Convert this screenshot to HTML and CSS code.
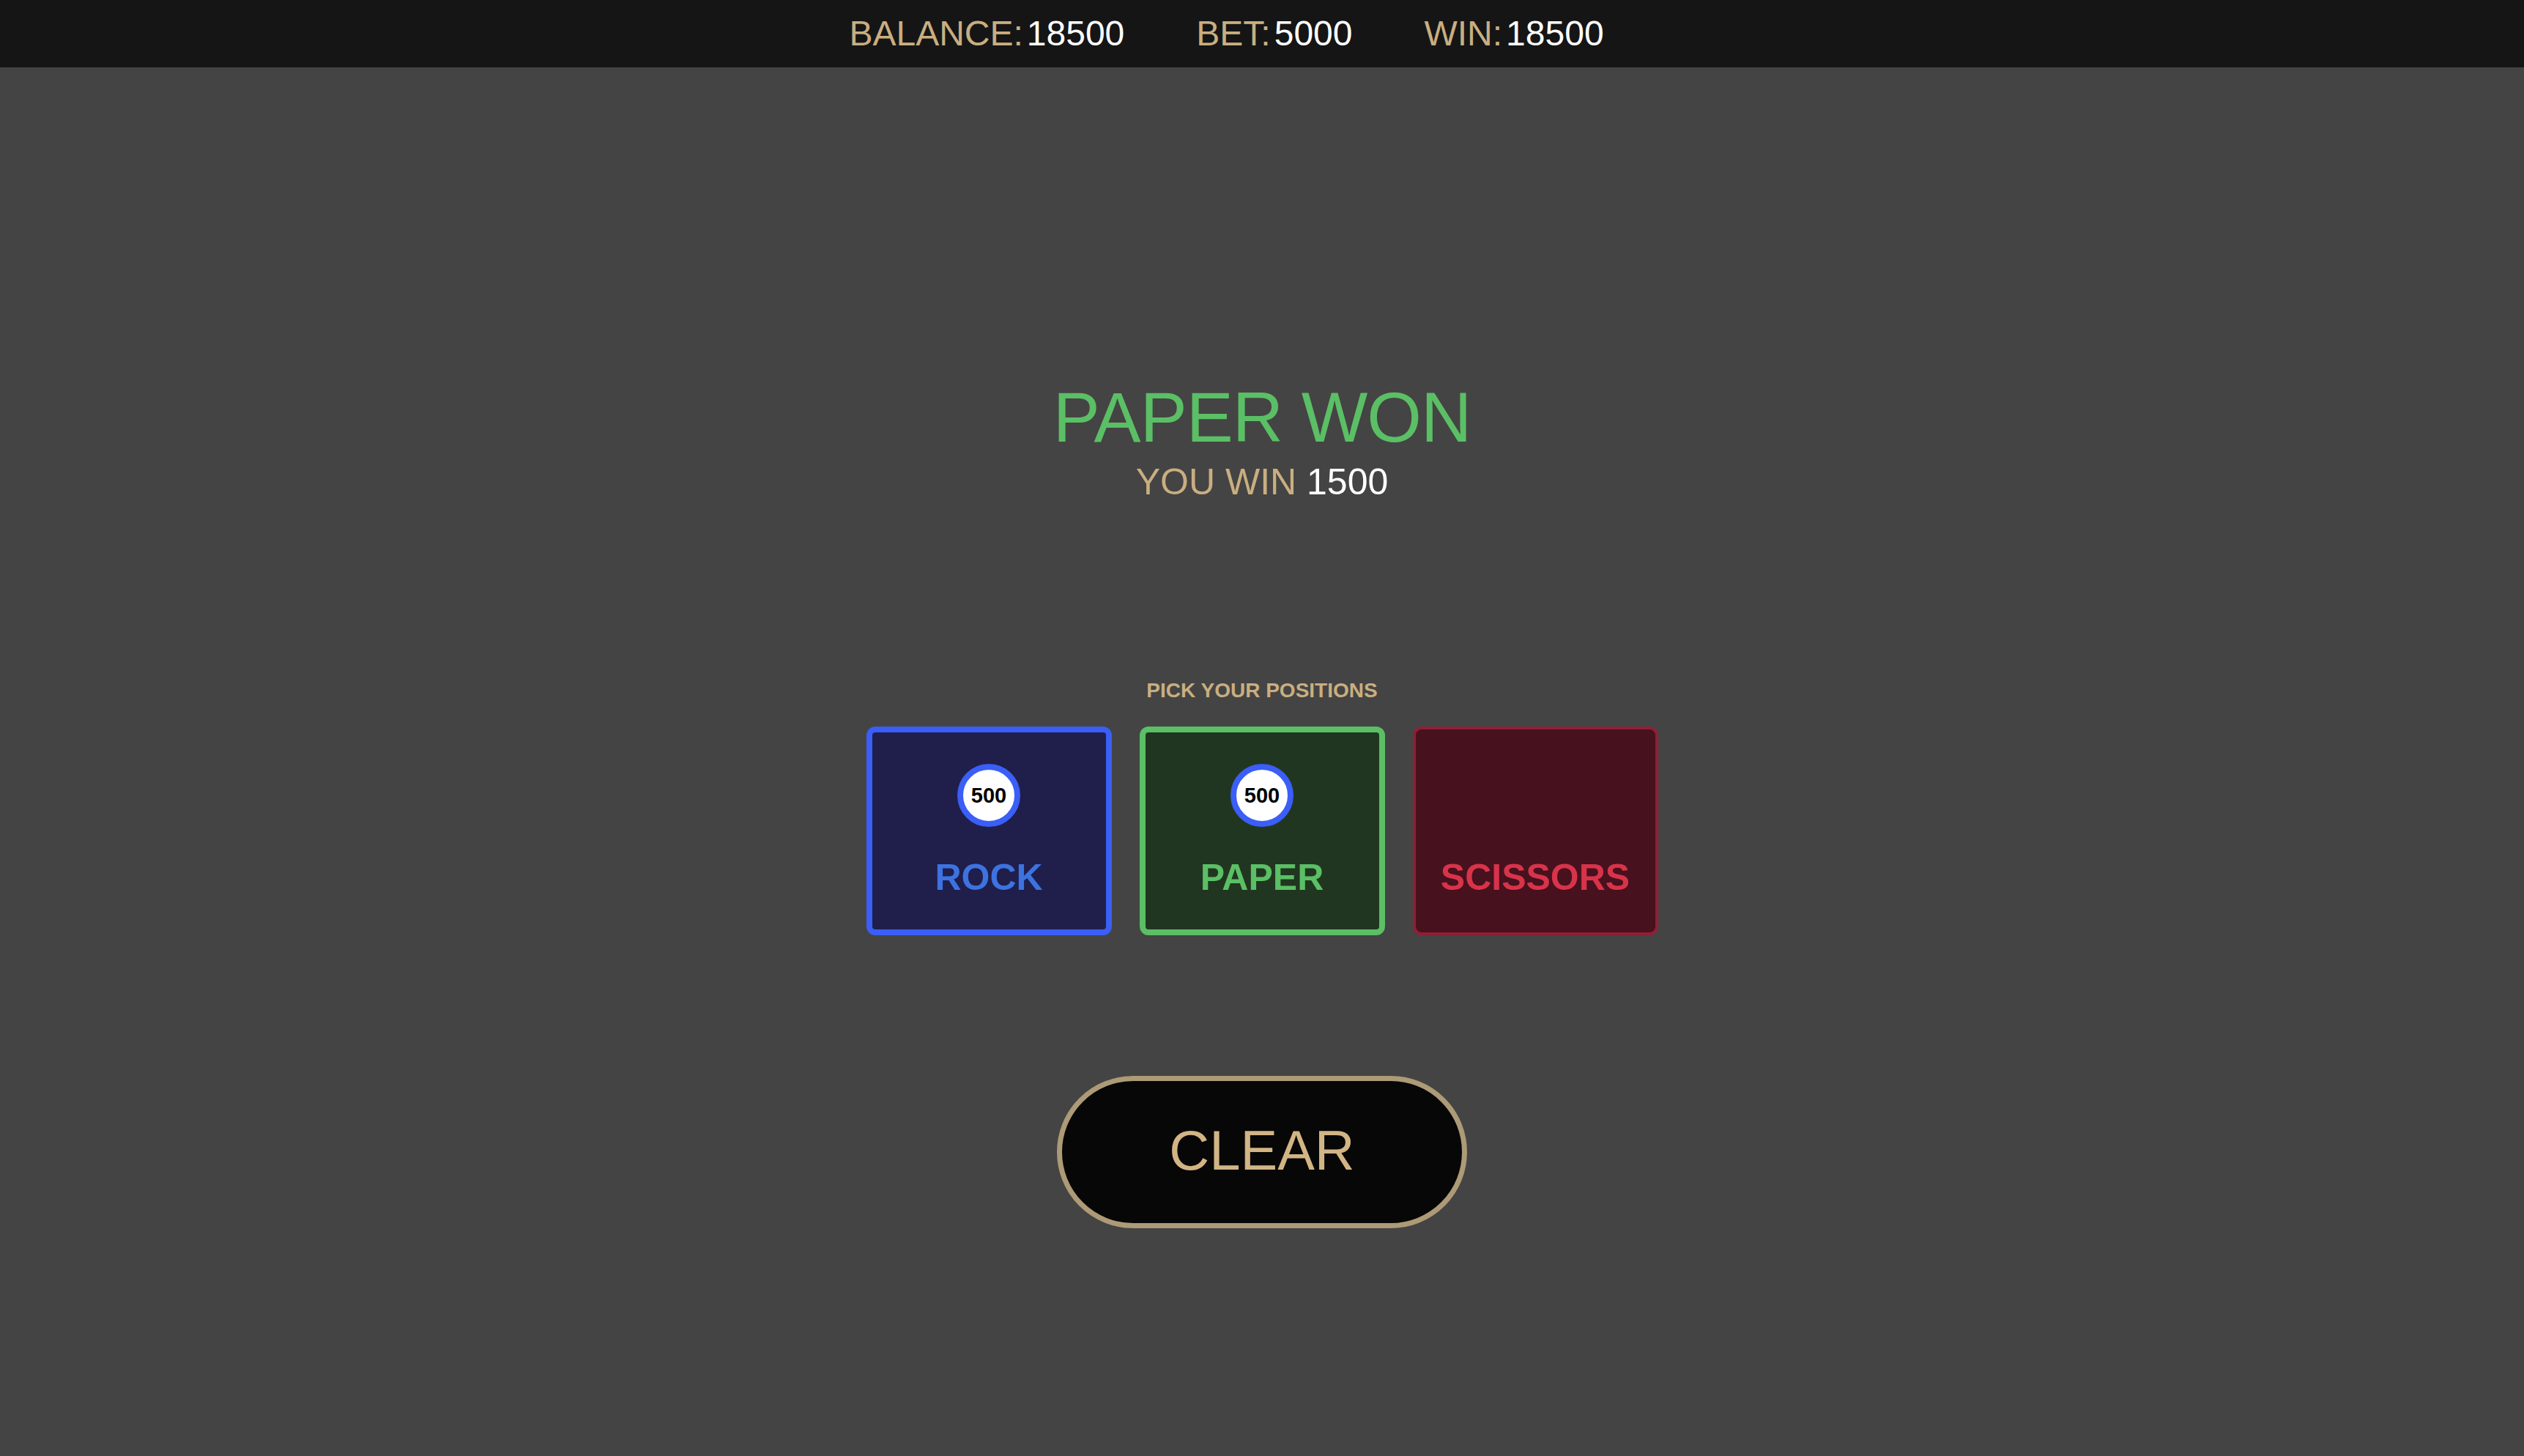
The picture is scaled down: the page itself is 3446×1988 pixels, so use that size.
FILE: index.html
```html
<!DOCTYPE html>
<html>
<head>
<meta charset="utf-8">
<link rel="stylesheet" href="styles.css">
</head>
<body>
<header class="topbar">
  <div class="stat"><span class="stat-label">BALANCE:</span><span class="stat-value">18500</span></div>
  <div class="stat"><span class="stat-label">BET:</span><span class="stat-value">5000</span></div>
  <div class="stat"><span class="stat-label">WIN:</span><span class="stat-value">18500</span></div>
</header>
<main class="game">
  <h1 class="result">PAPER WON</h1>
  <p class="win-line"><span class="win-label">YOU WIN</span> <span class="win-value">1500</span></p>
  <p class="pick">PICK YOUR POSITIONS</p>
  <div class="cards">
    <div class="card card-rock">
      <div class="chip">500</div>
      <div class="card-label">ROCK</div>
    </div>
    <div class="card card-paper">
      <div class="chip">500</div>
      <div class="card-label">PAPER</div>
    </div>
    <div class="card card-scissors">
      <div class="chip chip-empty"></div>
      <div class="card-label">SCISSORS</div>
    </div>
  </div>
  <button class="clear">CLEAR</button>
</main>
</body>
</html>
```
FILE: styles.css
```css
html, body {
  margin: 0;
  padding: 0;
}
body {
  background: #444444;
  font-family: "Liberation Sans", Arial, Helvetica, sans-serif;
  min-height: 1988px;
}
.topbar {
  height: 92px;
  background: #151515;
  display: flex;
  align-items: center;
  justify-content: center;
  gap: 98px;
  padding-right: 97px;
  font-size: 48px;
  line-height: 1;
}
.stat {
  display: flex;
  gap: 5px;
}
.stat-label {
  color: #c9ae80;
}
.stat-value {
  color: #ffffff;
}
.game {
  display: flex;
  flex-direction: column;
  align-items: center;
}
.result {
  margin: 430px 0 0 0;
  font-size: 96px;
  line-height: 1;
  font-weight: normal;
  letter-spacing: -1px;
  color: #5bbf65;
}
.win-line {
  margin: 15px 0 0 0;
  font-size: 50px;
  line-height: 1;
}
.win-label {
  color: #c9ae80;
}
.win-value {
  color: #ffffff;
}
.pick {
  margin: 246px 0 0 0;
  font-size: 28px;
  line-height: 1;
  font-weight: bold;
  color: #c9ae80;
}
.cards {
  margin-top: 35px;
  display: flex;
  gap: 38px;
}
.card {
  box-sizing: border-box;
  width: 335px;
  height: 285px;
  border: 8px solid;
  border-radius: 12px;
  display: flex;
  flex-direction: column;
  align-items: center;
  padding-top: 43px;
}
.card-rock {
  background: #201e4b;
  border-color: #3a5ef6;
  color: #3c73e0;
}
.card-paper {
  background: #213620;
  border-color: #5bbf65;
  color: #5bbf65;
}
.card-scissors {
  background: #47111e;
  border-width: 4px;
  border-color: #8f1f35;
  color: #d8334a;
  padding-top: 47px;
}
.chip {
  box-sizing: border-box;
  width: 86px;
  height: 86px;
  border-radius: 50%;
  border: 8px solid #3a5ef6;
  background: #ffffff;
  color: #000000;
  font-size: 29px;
  font-weight: bold;
  display: flex;
  align-items: center;
  justify-content: center;
}
.chip-empty {
  visibility: hidden;
}
.card-label {
  margin-top: 44px;
  font-size: 50px;
  line-height: 1;
  font-weight: bold;
}
.clear {
  margin-top: 192px;
  box-sizing: border-box;
  width: 560px;
  height: 208px;
  border: 7px solid #ad9a76;
  border-radius: 104px;
  background: #070707;
  color: #d2b485;
  font-family: "Liberation Sans", Arial, Helvetica, sans-serif;
  font-size: 76px;
  padding: 0 0 5px 0;
  display: flex;
  align-items: center;
  justify-content: center;
}
```
